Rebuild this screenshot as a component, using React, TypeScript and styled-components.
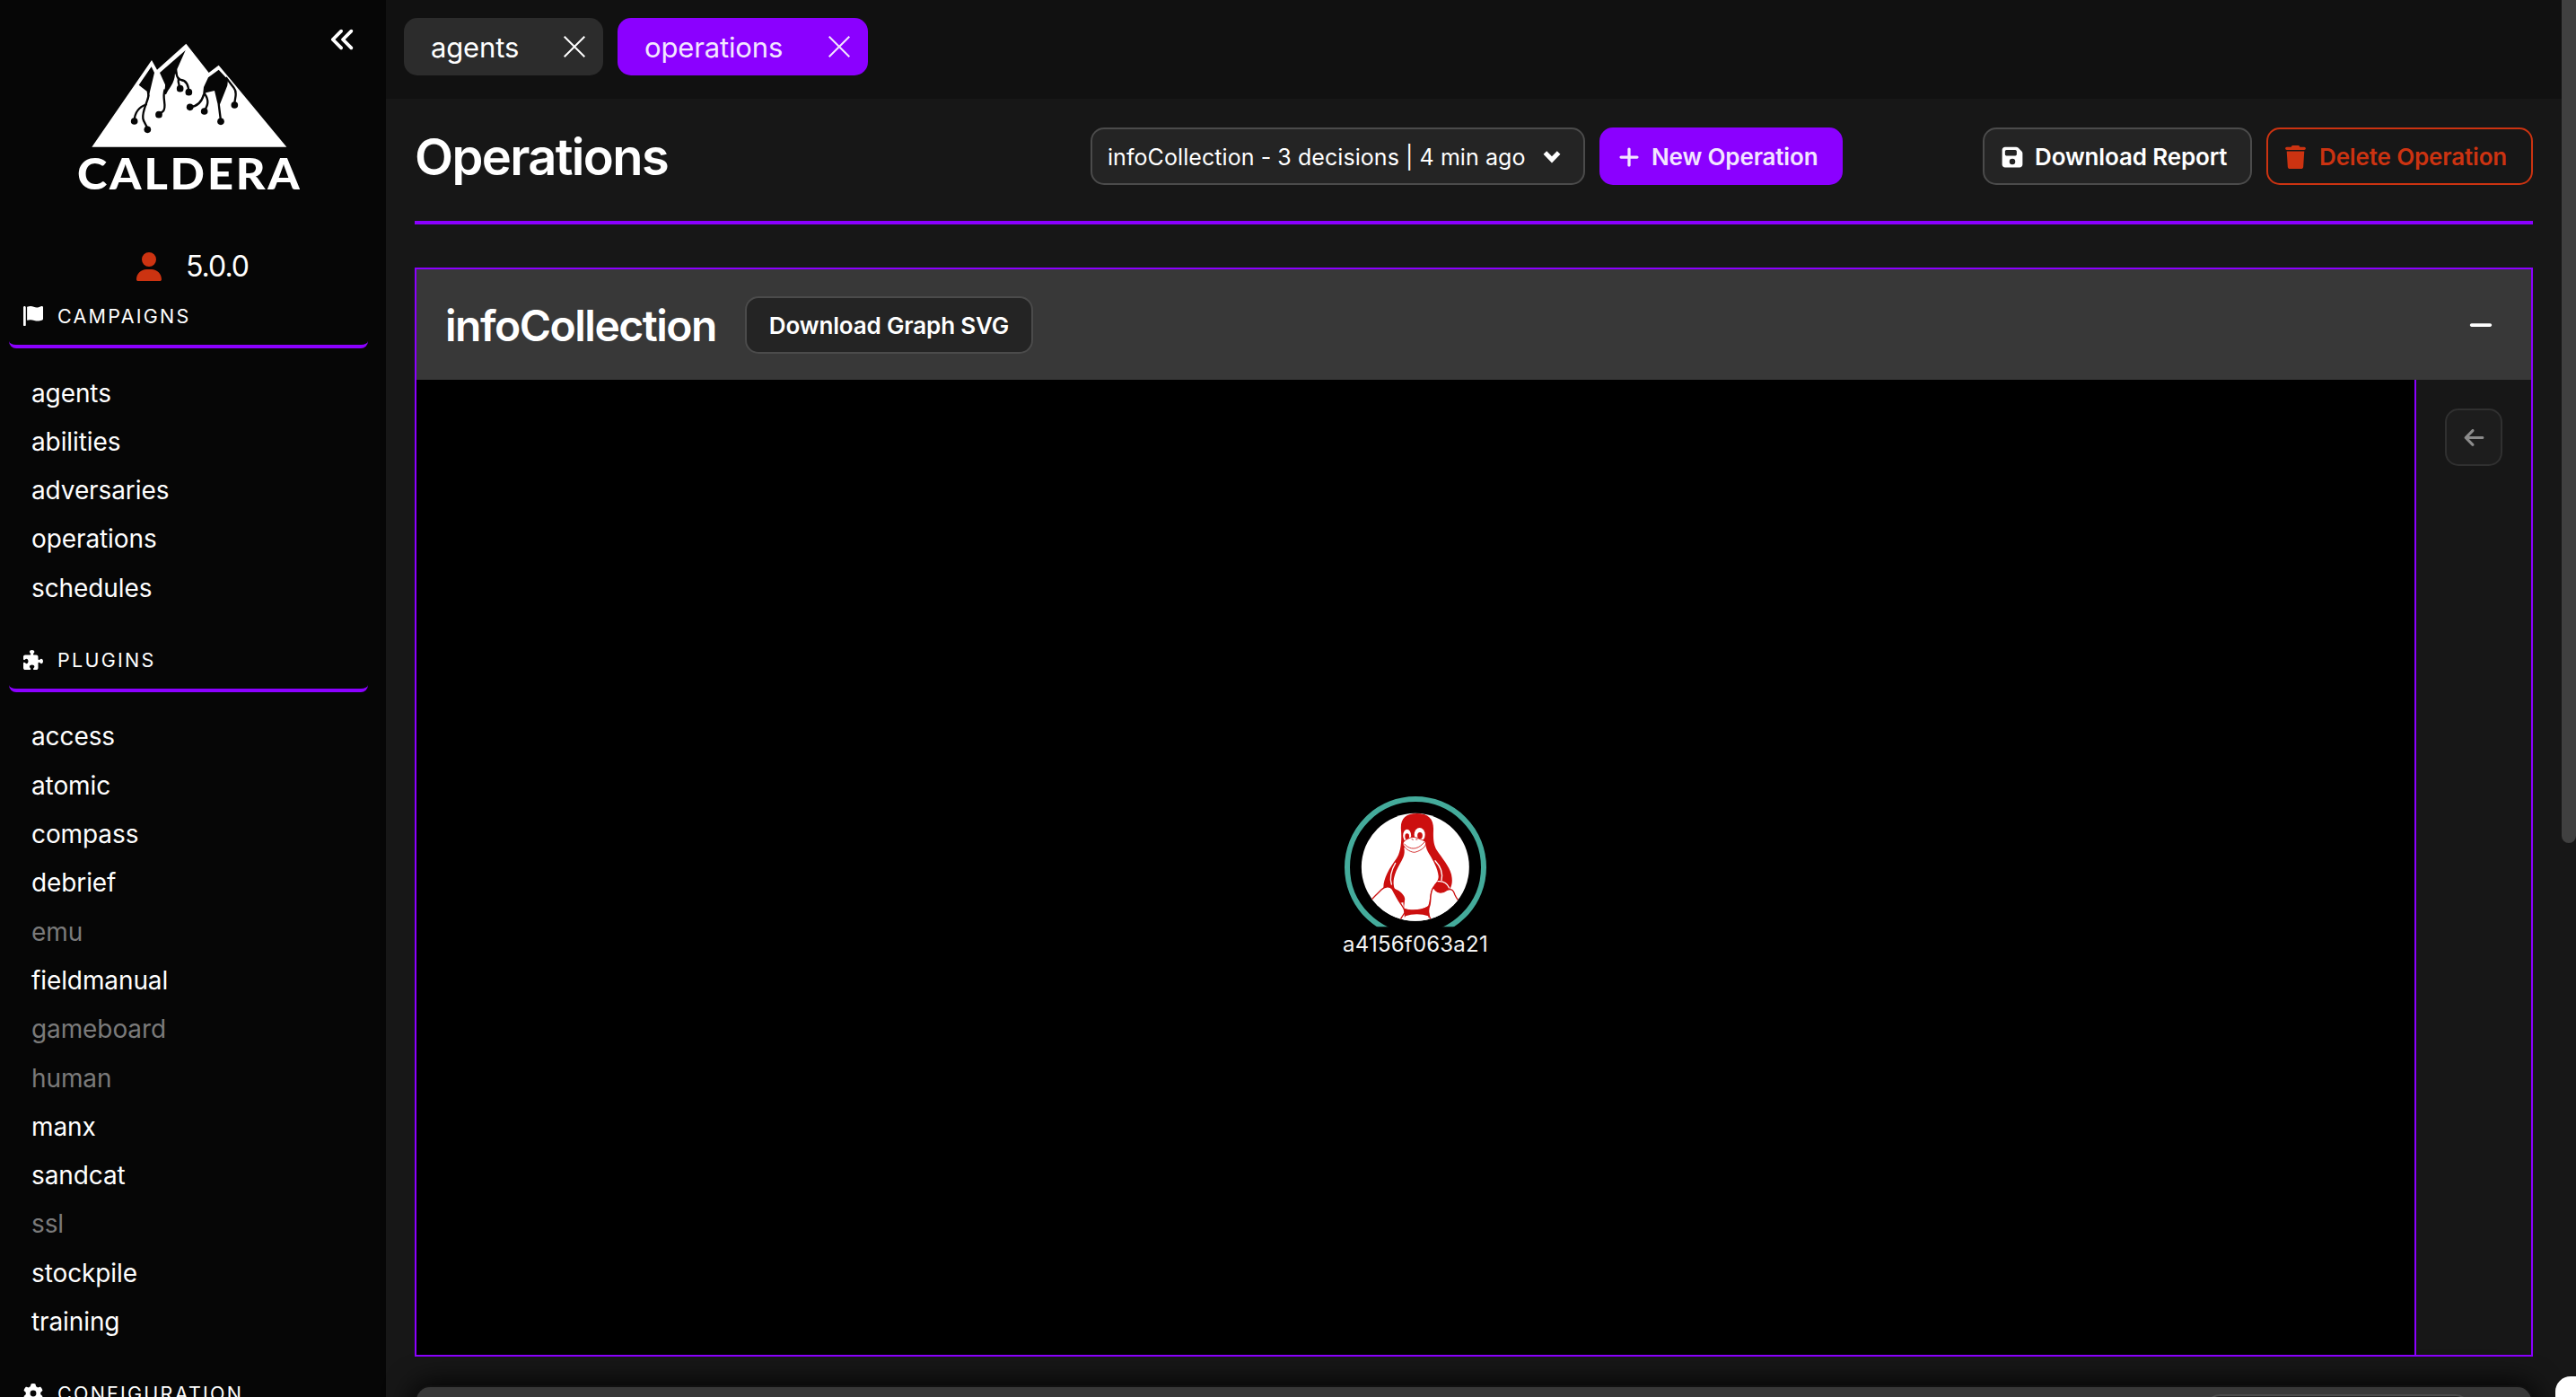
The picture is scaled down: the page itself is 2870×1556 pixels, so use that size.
import React from "react";
import styled, { createGlobalStyle, css } from "styled-components";
import { FaAnglesLeft, FaArrowLeft, FaFloppyDisk, FaGear, FaMinus, FaPlus, FaPuzzlePiece, FaUser } from "react-icons/fa6";

const accent = "#8b00ff";
const danger = "#cc3311";

const GlobalStyle = createGlobalStyle`
  * { box-sizing: border-box; }
  html, body { margin: 0; background: #171717; overflow: hidden; }
  body { font-family: Inter, "Liberation Sans", sans-serif; color: #fff; }
  button { font-family: inherit; margin: 0; }
`;

const Shell = styled.div`
  display: flex;
  width: 2870px;
  height: 1556px;
  overflow: hidden;
  background: #171717;
`;

const Sidebar = styled.aside`
  display: flex;
  flex-direction: column;
  flex: none;
  width: 430px;
  height: 1556px;
  overflow: hidden;
  background: #060606;
`;

const Brand = styled.div`
  display: flex;
  flex: none;
  justify-content: flex-end;
  align-items: flex-start;
  height: 262px;
  padding: 29px 33px 0 0;
`;

const LogoArt = styled.svg`
  flex: none;
  width: 250px;
  height: 190px;
  margin: 18px 32px 0 0;
`;

const CollapseButton = styled.button`
  display: flex;
  padding: 0;
  border: 0;
  background: none;
  color: #fff;
  font-size: 30px;
`;

const VersionRow = styled.div`
  display: flex;
  align-items: center;
  flex: none;
  height: 68px;
  margin-bottom: -10px;
  padding: 1px 0 0 150px;
  gap: 25px;
  font-size: 32px;
  letter-spacing: -1px;

  svg { color: ${danger}; }
`;

const SectionTitle = styled.h2<{ $first?: boolean }>`
  display: flex;
  align-items: center;
  flex: none;
  width: 400px;
  height: 68px;
  margin: ${(p) => (p.$first ? "0" : "22px")} 0 21.5px 10px;
  padding: 0 0 0 16px;
  gap: 16px;
  border-bottom: 4px solid ${accent};
  border-radius: 8px;
  font-size: 21.5px;
  font-weight: 400;
  letter-spacing: 2.25px;

  svg { flex: none; width: 22px; height: 22px; }
`;

const NavList = styled.ul`
  margin: 0;
  padding: 0 0 0 35px;
  list-style: none;
`;

const NavItem = styled.li<{ $muted?: boolean }>`
  height: 54.3px;
  padding-top: 1px;
  line-height: 54.3px;
  font-size: 28px;
  letter-spacing: -0.1px;
  color: ${(p) => (p.$muted ? "#7a7a7a" : "#fff")};
`;

const Main = styled.main`
  display: flex;
  flex-direction: column;
  flex: 1;
  min-width: 0;
`;

const TabBar = styled.nav`
  display: flex;
  flex: none;
  gap: 16px;
  height: 110px;
  padding: 20px;
  background: #111;
`;

const Tab = styled.div<{ $active?: boolean; $width: number }>`
  display: flex;
  align-items: center;
  justify-content: space-between;
  width: ${(p) => p.$width}px;
  height: 64px;
  padding: 0 20px 0 30px;
  border-radius: 15px;
  background: ${(p) => (p.$active ? accent : "#2c2c2c")};
  color: ${(p) => (p.$active ? "#f3e6ff" : "#fff")};
  font-size: 31px;
  letter-spacing: -0.15px;

  svg { width: 24px; height: 24px; }
`;

const Page = styled.section`
  display: flex;
  flex-direction: column;
  padding: 32px 32px 0;
`;

const Toolbar = styled.header`
  display: flex;
  align-items: center;
  height: 64px;
`;

const PageTitle = styled.h1`
  width: 753px;
  margin: 0;
  padding-top: 1px;
  font-size: 56px;
  font-weight: 600;
  line-height: 64px;
  letter-spacing: -1.65px;
`;

const control = css`
  display: flex;
  align-items: center;
  height: 64px;
  border: 2px solid #4b4b4b;
  border-radius: 15px;
  background: #242424;
  color: #fff;
  white-space: nowrap;
`;

const OperationSelect = styled.div`
  ${control}
  justify-content: space-between;
  width: 551px;
  padding: 1px 25px 0 17px;
  font-size: 25px;
  letter-spacing: 0.07px;

  svg { flex: none; }
`;

const Button = styled.button<{ $kind?: "primary" | "danger"; $width: number; $center?: boolean }>`
  ${control}
  gap: 12px;
  width: ${(p) => p.$width}px;
  padding: 1px 0 0 18px;
  font-size: 26px;
  font-weight: 600;
  letter-spacing: -0.15px;
  ${(p) => p.$center && css`justify-content: center; padding: 1px 0 0;`}
  ${(p) => p.$kind === "primary" && css`background: ${accent}; border-color: ${accent}; color: #f3e6ff;`}
  ${(p) => p.$kind === "danger" && css`background: transparent; border-color: ${danger}; color: ${danger}; gap: 15px; padding-left: 19px;`}

  svg { flex: none; }
`;

const ButtonGroup = styled.div<{ $end?: boolean }>`
  display: flex;
  gap: 16px;
  margin-left: ${(p) => (p.$end ? "auto" : "0")};
`;

const Rule = styled.hr`
  width: 100%;
  height: 4px;
  margin: 40px 0 48px;
  border: 0;
  background: ${accent};
`;

const Panel = styled.section`
  display: flex;
  flex-direction: column;
  height: 1213px;
  border: 2px solid ${accent};
`;

const PanelHeader = styled.header`
  display: flex;
  align-items: center;
  height: 123px;
  padding: 0 41px 0 32px;
  background: #383838;
`;

const PanelTitle = styled.h2`
  width: 334px;
  margin: 0;
  padding-top: 2px;
  font-size: 48px;
  font-weight: 600;
  line-height: 64px;
  letter-spacing: -1.5px;
`;

const Minimize = styled.span`
  display: flex;
  margin-left: auto;
  font-size: 30px;
`;

const PanelBody = styled.div`
  display: flex;
  flex: 1;
`;

const Graph = styled.div`
  display: flex;
  align-items: center;
  justify-content: center;
  flex: 1;
  background: #000;
`;

const SidePane = styled.div`
  display: flex;
  justify-content: center;
  width: 130px;
  padding-top: 32px;
  border-left: 2px solid ${accent};
`;

const BackButton = styled.button`
  ${control}
  justify-content: center;
  width: 64px;
  padding: 0;
  border-color: #303030;
  background: #1d1d1d;
  color: #8b8b8b;
  font-size: 25px;
`;

const NextCard = styled.section`
  display: flex;
  justify-content: flex-end;
  flex: none;
  height: 120px;
  margin: 34px 2px 0;
  padding: 8px 69px 0 0;
  border-radius: 15px;
  background: #383838;
  box-shadow: 0 0 0 2px #111, 0 0 32px 3px #000;
`;

const NextCardControl = styled.div`
  ${control}
  width: 293px;
`;

const ScrollTrack = styled.div`
  flex: none;
  width: 16px;
  height: 1556px;
`;

const ScrollThumb = styled.div`
  height: 939px;
  border-radius: 0 0 8px 8px;
  background: #404040;
`;

const FloatingCorner = styled.div`
  position: absolute;
  left: 2847px;
  top: 1533px;
  width: 23px;
  height: 23px;
  border-radius: 17px 0 0 0;
  background: #fff;
`;

const Logo = () => (
  <LogoArt viewBox="45 50 750 570">
    <path fill="#fff" d="M97 400L297 110L315 142L412 55L488 152L521 127L748 400Z" />
    <g fill="#060606">
      <path d="M254 193L296 132L306 152L291 215L285 245L281 214Z" />
      <path d="M324 152L410 77L382 140L383 162L375 154C374 190 352 205 345 225L336 222C343 205 342 194 342 192Z" />
      <path d="M486 168L521 142L552 175L550 195L524 260L516 250L507 212L478 219L467 236L471 200Z" />
      <circle cx="283" cy="342" r="11.5" />
      <circle cx="239" cy="314" r="11.5" />
      <circle cx="321" cy="292" r="11.5" />
      <circle cx="392" cy="205" r="11.5" />
      <circle cx="421" cy="217" r="11.5" />
      <circle cx="425" cy="267" r="11.5" />
      <circle cx="473" cy="281" r="11.5" />
      <circle cx="528" cy="315" r="11.5" />
      <circle cx="574" cy="260" r="11.5" />
    </g>
    <g fill="none" stroke="#060606" strokeWidth="7">
      <path d="M287 225C284 250 264 280 268 305C270 320 283 328 283 342" />
      <path d="M281 257C255 266 240 285 239 313" />
      <path d="M341 208C330 240 350 265 335 281L322 291" />
      <path d="M378 148C382 172 388 174 395 176C412 178 420 190 421 217" />
      <path d="M387 168C383 187 390 193 392 205" />
      <path d="M471 225C464 250 450 265 425 266" />
      <path d="M474 222C490 245 485 260 473 280" />
      <path d="M519 240L528 313" />
      <path d="M545 168L572 203C586 220 573 240 574 258" />
    </g>
    <text x="48" y="541" fill="#fff" fontFamily="Lato, sans-serif" fontWeight="900" fontSize="144" letterSpacing="8" textLength="752" lengthAdjust="spacingAndGlyphs">CALDERA</text>
  </LogoArt>
);

const FlagIcon = () => (
  <svg viewBox="0 0 512 512" fill="currentColor">
    <path d="M64 496C64 504.8 56.75 512 48 512h-32C7.25 512 0 504.8 0 496V32c0-17.75 14.25-32 32-32s32 14.25 32 32V496zM476.3 0c-6.365 0-13.01 1.35-19.34 4.233c-45.69 20.86-79.56 27.94-107.8 27.94c-59.96 0-94.81-31.86-163.9-31.87C160.9 .3055 131.6 4.867 96 15.75v350.5c32-9.984 59.87-14.1 84.85-14.1c73.63 0 124.9 31.78 198.6 31.78c31.91 0 68.02-5.971 111.1-23.09C504.1 355.9 512 344.4 512 332.1V30.73C512 11.1 495.3 0 476.3 0z" />
  </svg>
);

const TrashIcon = () => (
  <svg width="23" height="26" viewBox="0 0 448 512" fill="currentColor">
    <path d="M135.2 17.69C140.6 6.848 151.7 0 163.8 0H284.2C296.3 0 307.4 6.848 312.8 17.69L320 32H416C433.7 32 448 46.33 448 64C448 81.67 433.7 96 416 96H32C14.33 96 0 81.67 0 64C0 46.33 14.33 32 32 32H128L135.2 17.69zM394.8 466.1C393.2 492.3 372.3 512 346.9 512H101.1C75.75 512 54.77 492.3 53.19 466.1L31.1 128H416L394.8 466.1z" />
  </svg>
);

const CloseIcon = () => (
  <svg viewBox="0 0 24 24" fill="none" stroke="currentColor" strokeWidth="2">
    <path d="M.7.7L23.3 23.3M23.3.7L.7 23.3" />
  </svg>
);

const ChevronIcon = () => (
  <svg width="20" height="15" viewBox="0 0 20 15">
    <path d="M2.4 2.9L10 10.8L17.6 2.9" fill="none" stroke="#fff" strokeWidth="5" strokeLinejoin="miter" strokeLinecap="butt" />
  </svg>
);

const AgentNode = () => (
  <svg width="200" height="200" viewBox="-9 -12 600 600">
    <defs>
      <clipPath id="ring"><rect x="40" y="40" width="500" height="447" /></clipPath>
      <clipPath id="disc"><circle cx="290.5" cy="287.5" r="180" /></clipPath>
    </defs>
    <circle cx="291" cy="288" r="228" fill="none" stroke="#44ab9b" strokeWidth="18" clipPath="url(#ring)" />
    <circle cx="290.5" cy="287.5" r="180" fill="#fff" />
    <g clipPath="url(#disc)" strokeLinecap="round">
      <path fill="#cc0f0f" d="M243 165C239 128 256 108 296 108C336 108 353 128 351 165C350 195 352 213 362 230C380 258 404 283 411 312C416 335 413 348 406 362L385 372L340 405L335 460L255 460L250 405L184 355C184 325 203 292 228 258C240 240 246 208 243 165Z" />
      <path fill="#fff" d="M253 222C258 247 247 262 238 278C221 308 212 335 222 362C245 375 258 392 254 410C253 416 252 422 254 427C276 434 310 434 333 418C342 400 335 375 355 345C366 335 368 325 368 318C366 292 350 265 338 245C330 232 326 222 325 212Z" />
      <path fill="none" stroke="#fff" strokeWidth="4" d="M224 274C209 300 205 325 211 345M357 266C375 285 384 305 378 331" />
      <path fill="#cc0f0f" d="M203 344C211 354 222 359 235 366C251 377 261 393 253 403C247 409 237 407 230 397L202 356Z" />
      <path fill="#cc0f0f" d="M357 345C364 333 379 332 390 337C401 343 406 351 401 362C394 372 371 379 362 366C356 359 355 352 357 345Z" />
      <path fill="none" stroke="#fff" strokeWidth="4" d="M366 335C384 333 397 341 404 357" />
      <path fill="#fff" stroke="#cc0f0f" strokeWidth="4" d="M140 402C152 386 166 375 177 363C188 351 206 350 213 360C221 374 230 392 238 404C248 420 258 430 254 441L240 463L180 480Z" />
      <path fill="#fff" stroke="#cc0f0f" strokeWidth="4" d="M342 463C333 445 332 430 339 414C344 394 338 370 352 354C359 375 380 377 398 363C413 359 418 365 423 380C427 390 432 395 436 402L420 470Z" />
      <path fill="#cc0f0f" d="M253 425C276 433 310 432 335 417L337 446C310 442 280 442 255 448Z" />
      <path fill="#fff" d="M258 451C280 443 312 443 333 451L344 480L240 480Z" />
      <ellipse cx="263" cy="182" rx="13.5" ry="21" fill="#fff" />
      <ellipse cx="305" cy="179" rx="18" ry="23" fill="#fff" />
      <ellipse cx="263" cy="185" rx="7" ry="10" fill="#cc0f0f" />
      <ellipse cx="306" cy="182" rx="8.5" ry="11" fill="#cc0f0f" />
      <path fill="#fff" stroke="#cc0f0f" strokeWidth="2.5" d="M249 207C256 195 268 192 277 188C289 185 300 191 311 196C322 199 327 204 325 213C320 226 300 236 287 238C272 237 250 223 249 207Z" />
      <path fill="none" stroke="#cc0f0f" strokeWidth="2.5" d="M254 210C265 223 279 227 292 224C304 221 313 213 320 205" />
      <path fill="none" stroke="#cc0f0f" strokeWidth="2.5" d="M279 194L283 196M293 195L297 195" />
    </g>
    <text x="48" y="570" fill="#f5f5f5" fontFamily="Inter, sans-serif" fontSize="72" textLength="485" lengthAdjust="spacing">a4156f063a21</text>
  </svg>
);

const campaigns = ["agents", "abilities", "adversaries", "operations", "schedules"];
const plugins = ["access", "atomic", "compass", "debrief", "emu", "fieldmanual", "gameboard", "human", "manx", "sandcat", "ssl", "stockpile", "training"];
const disabledPlugins = new Set(["emu", "gameboard", "human", "ssl"]);

export default function App() {
  return (
    <Shell>
      <GlobalStyle />
      <Sidebar>
        <Brand>
          <Logo />
          <CollapseButton aria-label="Collapse"><FaAnglesLeft /></CollapseButton>
        </Brand>
        <VersionRow><FaUser />5.0.0</VersionRow>
        <SectionTitle $first><FlagIcon />CAMPAIGNS</SectionTitle>
        <NavList>
          {campaigns.map((name) => <NavItem key={name}>{name}</NavItem>)}
        </NavList>
        <SectionTitle><FaPuzzlePiece />PLUGINS</SectionTitle>
        <NavList>
          {plugins.map((name) => <NavItem key={name} $muted={disabledPlugins.has(name)}>{name}</NavItem>)}
        </NavList>
        <SectionTitle><FaGear />CONFIGURATION</SectionTitle>
      </Sidebar>
      <Main>
        <TabBar>
          <Tab $width={222}>agents<CloseIcon /></Tab>
          <Tab $width={279} $active>operations<CloseIcon /></Tab>
        </TabBar>
        <Page>
          <Toolbar>
            <PageTitle>Operations</PageTitle>
            <ButtonGroup>
              <OperationSelect>infoCollection - 3 decisions | 4 min ago<ChevronIcon /></OperationSelect>
              <Button $kind="primary" $width={271}><FaPlus />New Operation</Button>
            </ButtonGroup>
            <ButtonGroup $end>
              <Button $width={300}><FaFloppyDisk />Download Report</Button>
              <Button $kind="danger" $width={297}><TrashIcon />Delete Operation</Button>
            </ButtonGroup>
          </Toolbar>
          <Rule />
          <Panel>
            <PanelHeader>
              <PanelTitle>infoCollection</PanelTitle>
              <Button $width={321} $center>Download Graph SVG</Button>
              <Minimize><FaMinus /></Minimize>
            </PanelHeader>
            <PanelBody>
              <Graph><AgentNode /></Graph>
              <SidePane><BackButton aria-label="Back"><FaArrowLeft /></BackButton></SidePane>
            </PanelBody>
          </Panel>
          <NextCard><NextCardControl /></NextCard>
        </Page>
      </Main>
      <ScrollTrack><ScrollThumb /></ScrollTrack>
      <FloatingCorner />
    </Shell>
  );
}
